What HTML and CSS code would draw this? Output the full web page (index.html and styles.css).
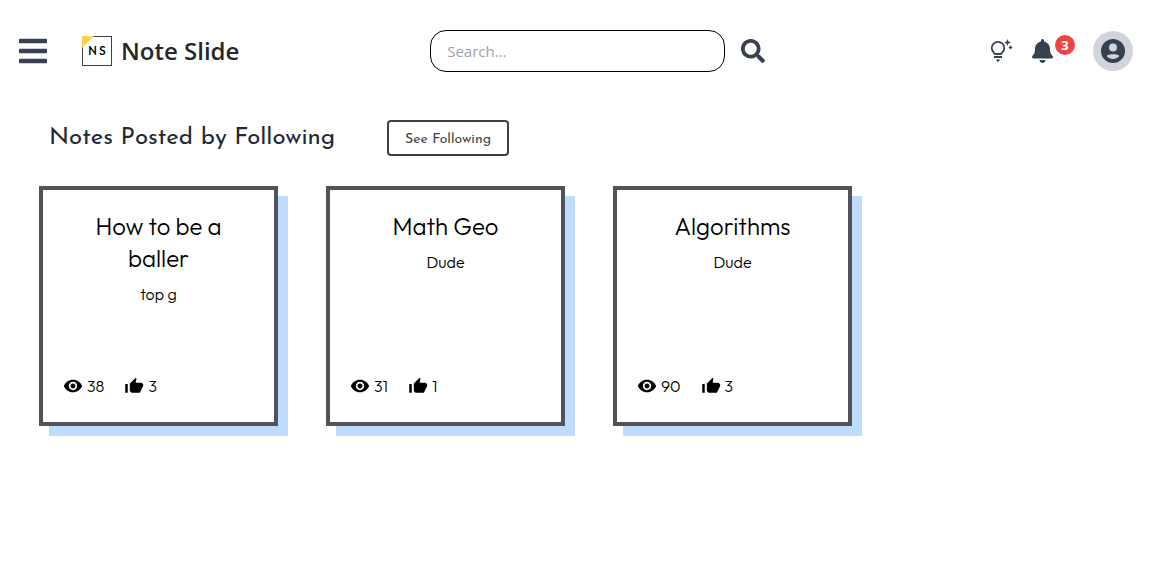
FILE: index.html
```html
<!DOCTYPE html>
<html lang="en">
  <head>
    <meta charset="utf-8">
    <meta name="viewport" content="width=device-width, initial-scale=1">
    <title>Note Slide</title>
    <link rel="stylesheet" href="styles.css">
  </head>
  <body>
    <svg class="sprite" aria-hidden="true">
      <symbol id="eye" viewBox="0 0 24 24">
        <path d="M12 4.500C7 4.500 2.730 7.610 1 12c1.730 4.390 6 7.500 11 7.500s9.270-3.110 11-7.500c-1.730-4.390-6-7.500-11-7.500zM12 17c-2.760 0-5-2.240-5-5s2.240-5 5-5 5 2.240 5 5-2.240 5-5 5zm0-8c-1.660 0-3 1.340-3 3s1.340 3 3 3 3-1.340 3-3-1.340-3-3-3z"/>
      </symbol>
      <symbol id="thumb" viewBox="0 0 24 24">
        <path d="M1.500 9.500h3V20h-3zM14 2 7 9v9l2 2h10l4-8v-2l-2-2h-7l1-5z"/>
      </symbol>
    </svg>
    <header class="navbar">
      <div class="brand">
        <button class="icon-button menu" aria-label="Menu">
          <svg viewBox="0 0 448 512"><path d="M16 132h416c8.837 0 16-7.163 16-16V76c0-8.837-7.163-16-16-16H16C7.163 60 0 67.163 0 76v40c0 8.837 7.163 16 16 16zm0 160h416c8.837 0 16-7.163 16-16v-40c0-8.837-7.163-16-16-16H16c-8.837 0-16 7.163-16 16v40c0 8.837 7.163 16 16 16zm0 160h416c8.837 0 16-7.163 16-16v-40c0-8.837-7.163-16-16-16H16c-8.837 0-16 7.163-16 16v40c0 8.837 7.163 16 16 16z"/></svg>
        </button>
        <a class="home" href="#"><span class="logo"><span>N</span><span>S</span></span>Note Slide</a>
      </div>
      <form class="search" role="search">
        <input type="text" placeholder="Search..." aria-label="Search notes">
        <button type="button" class="icon-button find" aria-label="Search">
          <svg viewBox="0 0 512 512"><path d="M505 442.700L405.300 343c-4.500-4.500-10.600-7-17-7H372c27.600-35.300 44-79.700 44-128C416 93.100 322.900 0 208 0S0 93.100 0 208s93.100 208 208 208c48.300 0 92.700-16.400 128-44v16.300c0 6.400 2.500 12.500 7 17l99.700 99.700c9.400 9.400 24.600 9.400 33.900 0l28.300-28.300c9.400-9.400 9.400-24.600.1-34zM208 336c-70.700 0-128-57.200-128-128 0-70.700 57.200-128 128-128 70.700 0 128 57.200 128 128 0 70.700-57.200 128-128 128z"/></svg>
        </button>
      </form>
      <nav class="actions">
        <button class="icon-button theme" aria-label="Change theme">
          <svg viewBox="0 0 24 24">
            <path d="M6 17h8v2H6zM8 20.500h4l-1 2H9z"/>
            <path d="M7 15h6c1-1.500 3.300-2.700 3.300-5.900a6.300 6.300 0 0 0-12.600 0C3.700 12.300 6 13.500 7 15z" fill="none" stroke="currentColor" stroke-width="1.800"/>
            <path d="m19.500 0 1 2.500L23 3.500l-2.500 1-1 2.500-1-2.500-2.500-1 2.500-1zM22.500 6.500l.9 1.100 1.100.9-1.100.9-.9 1.100-.9-1.100-1.100-.9 1.100-.9z"/>
          </svg>
        </button>
        <button class="icon-button bell" aria-label="Notifications, 3 unread">
          <svg viewBox="0 0 448 512"><path d="M224 512c35.320 0 63.970-28.650 63.970-64H160.030c0 35.350 28.650 64 63.970 64zm215.390-149.710c-19.320-20.760-55.470-51.990-55.470-154.290 0-77.700-54.480-139.900-127.940-155.160V32c0-17.670-14.320-32-31.980-32s-31.980 14.330-31.980 32v20.840C118.560 68.100 64.080 130.300 64.080 208c0 102.300-36.150 133.530-55.470 154.290-6 6.450-8.660 14.160-8.610 21.710.11 16.400 12.980 32 32.100 32h383.800c19.120 0 32-15.600 32.100-32 .05-7.550-2.610-15.270-8.610-21.710z"/></svg>
          <span class="badge">3</span>
        </button>
        <button class="icon-button avatar" aria-label="Account">
          <svg viewBox="0 0 24 24"><path d="M12 0a12 12 0 1 0 0 24 12 12 0 0 0 0-24zm0 4.500a4 4 0 1 1 0 8 4 4 0 0 1 0-8zM12 20c-2.800 0-5-1.200-6.300-2.900.9-2.500 11.700-2.500 12.600 0C17 18.800 14.800 20 12 20z"/></svg>
        </button>
      </nav>
    </header>
    <main>
      <div class="heading">
        <h1>Notes Posted by Following</h1>
        <button class="see-following">See Following</button>
      </div>
      <section class="notes">
        <article class="note">
          <h2>How to be a baller</h2>
          <p>top g</p>
          <div class="stats">
            <span class="stat"><svg><use href="#eye"/></svg>38</span>
            <span class="stat"><svg><use href="#thumb"/></svg>3</span>
          </div>
        </article>
        <article class="note">
          <h2>Math Geo</h2>
          <p>Dude</p>
          <div class="stats">
            <span class="stat"><svg><use href="#eye"/></svg>31</span>
            <span class="stat"><svg><use href="#thumb"/></svg>1</span>
          </div>
        </article>
        <article class="note">
          <h2>Algorithms</h2>
          <p>Dude</p>
          <div class="stats">
            <span class="stat"><svg><use href="#eye"/></svg>90</span>
            <span class="stat"><svg><use href="#thumb"/></svg>3</span>
          </div>
        </article>
      </section>
    </main>
  </body>
</html>
```
FILE: styles.css
```css
* {
  box-sizing: border-box;
}
body {
  margin: 0;
  background: #fff;
  color: #000;
  font-family: Outfit, Lato, sans-serif;
  font-size: 16px;
}
h1, h2, p {
  margin: 0;
}
button, input {
  font: inherit;
}
svg {
  display: block;
  fill: currentColor;
}
.sprite {
  display: none;
}

/* top bar */
.navbar {
  display: flex;
  justify-content: space-between;
  align-items: center;
  padding: 30px 36px 30px 17px;
}
.brand {
  display: flex;
  align-items: center;
  gap: 33px;
}
.icon-button {
  padding: 0;
  border: 0;
  background: none;
  color: #374151;
  cursor: pointer;
}
.menu svg {
  width: 32px;
  height: 32px;
}
.home {
  display: flex;
  align-items: center;
  gap: 9px;
  color: #27272a;
  font: 600 24px/32px "Open Sans", sans-serif;
  text-decoration: none;
}
.logo {
  position: relative;
  display: flex;
  justify-content: center;
  gap: 2px;
  width: 30px;
  height: 30px;
  border: 1px solid #3f3f46;
  color: #000;
  font: 500 12px/28px Outfit, Lato, sans-serif;
}
/* folded corner */
.logo::before {
  content: "";
  position: absolute;
  top: -1px;
  left: -1px;
  width: 12px;
  height: 12px;
  background: #fcd34d;
  clip-path: polygon(0 0, 100% 0, 0 100%);
}
.search {
  display: flex;
  align-items: center;
  gap: 16px;
  padding-right: 32px;
}
.search input {
  width: 295px;
  height: 42px;
  padding: 0 16px;
  border: 1px solid #000;
  border-radius: 16px;
  font-family: "Open Sans", sans-serif;
  font-size: 15px;
}
.search input::placeholder {
  color: #9ca3af;
}
.find svg {
  width: 24px;
  height: 24px;
}
.actions {
  display: flex;
  justify-content: flex-end;
  align-items: center;
}
.theme svg {
  width: 24px;
  height: 24px;
  overflow: visible;
}
.bell {
  position: relative;
  margin: 0 40px 0 20px;
}
.bell svg {
  width: 21px;
  height: 24px;
}
.badge {
  position: absolute;
  top: -4px;
  left: 23px;
  width: 20px;
  height: 20px;
  border-radius: 50%;
  background: #ef4444;
  color: #fff;
  font: 700 13px/20px "Open Sans", sans-serif;
}
.avatar {
  display: grid;
  place-items: center;
  width: 40px;
  height: 40px;
  border-radius: 50%;
  background: #d1d5db;
}
.avatar svg {
  width: 24px;
  height: 24px;
}

/* notes */
main {
  padding-bottom: 48px;
}
.heading {
  display: flex;
  align-items: center;
  gap: 52px;
  padding: 18px 49px 30px;
}
h1 {
  color: #1f2937;
  font: 400 24px/32px "Josefin Sans", Lato, sans-serif;
}
.see-following {
  height: 36px;
  padding: 4px 16px 0;
  border: 2px solid #3f3f46;
  border-radius: 4px;
  background: #fff;
  color: #3f3f46;
  font: 400 14px/20px "Josefin Sans", Lato, sans-serif;
}
.notes {
  display: flex;
  flex-wrap: wrap;
  gap: 48px;
  padding: 0 39px;
}
.note {
  display: flex;
  flex-direction: column;
  width: 239px;
  height: 240px;
  padding: 20px 20px 24px;
  border: 4px solid #52525b;
  box-shadow: 10px 10px #bfdbfe;
  text-align: center;
}
.note h2 {
  padding: 0 16px;
  font-size: 24px;
  font-weight: 300;
  line-height: 32px;
}
.note p {
  margin-top: 8px;
  font-weight: 300;
  line-height: 24px;
}
.stats {
  display: flex;
  gap: 20px;
  margin-top: auto;
}
.stat {
  display: flex;
  align-items: center;
  gap: 4px;
  font-weight: 300;
  line-height: 24px;
}
.stat svg {
  width: 20px;
  height: 20px;
}
```
